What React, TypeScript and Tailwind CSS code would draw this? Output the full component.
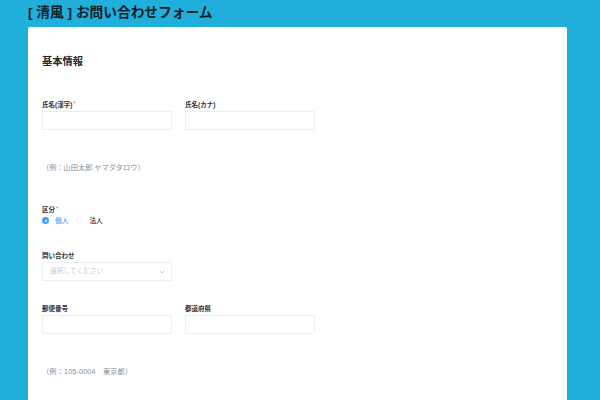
import { ChevronDown } from "lucide-react";

function Label({ text, required }: { text: string; required?: boolean }) {
  return (
    <div className="flex h-[9px] items-start text-[6.5px] leading-[9px] font-bold text-[#303133]">
      {text}
      {required && <span className="-mt-[1px] ml-[1px] font-normal text-[#f56c6c]">*</span>}
    </div>
  );
}

function Field({ label, required }: { label: string; required?: boolean }) {
  return (
    <div className="w-[130px]">
      <Label text={label} required={required} />
      <div className="mt-[2px] h-[19px] rounded-[2px] border border-[#eceef1] bg-white shadow-[0_0_1px_#eceef1]" />
    </div>
  );
}

export default function App() {
  return (
    <div className="h-[400px] w-[600px] overflow-hidden bg-[#20aedb] pl-[28px] pr-[33px]">
      <div className="font-['Liberation_Sans','Noto_Sans_CJK_JP',sans-serif]">
        <h1 className="h-[27px] pt-[3px] text-[13.7px] leading-[20px] font-bold text-[#0f1d26]">
          [ 清風 ] お問い合わせフォーム
        </h1>
        <div className="h-[373px] rounded-t-[2px] bg-white pl-[14px]">
          <h2 className="pt-[28px] text-[10.25px] leading-[14px] font-bold text-[#25272b]">基本情報</h2>

          <div className="mt-[31px] flex gap-[13px]">
            <Field label="氏名(漢字)" required />
            <Field label="氏名(カナ)" />
          </div>
          <p className="mt-[33px] text-[7.2px] leading-[10px] text-[#8a8d93]">（例：山田太郎 ヤマダタロウ）</p>

          <div className="mt-[32px]">
            <Label text="区分" required />
            <div className="mt-[2px] flex h-[9px] items-center text-[6.7px] leading-[9px] font-medium">
              <span className="flex h-[7px] w-[7px] items-center justify-center rounded-full bg-[#409eff]">
                <span className="h-[2px] w-[2px] rounded-full bg-white" />
              </span>
              <span className="ml-[6px] text-[#409eff]">個人</span>
              <span className="ml-[8px] h-[7px] w-[7px] rounded-full border border-[#eceef1]" />
              <span className="ml-[6px] text-[#303133]">法人</span>
            </div>
          </div>

          <div className="mt-[26px] w-[130px]">
            <Label text="問い合わせ" />
            <div className="mt-[2px] flex h-[19px] items-center justify-between rounded-[2px] border border-[#eceef1] pl-[7px] pr-[5px] text-[6.7px] text-[#c8cad0] shadow-[0_0_1px_#eceef1]">
              <span>選択してください</span>
              <ChevronDown className="h-[8px] w-[8px] text-[#b4b8c0]" strokeWidth={2} />
            </div>
          </div>

          <div className="mt-[23px] flex gap-[13px]">
            <Field label="郵便番号" />
            <Field label="都道府県" />
          </div>
          <p className="mt-[33px] text-[7.2px] leading-[10px] tracking-[0.15px] text-[#8a8d93]">（例：105-0004　東京都）</p>
        </div>
      </div>
    </div>
  );
}
